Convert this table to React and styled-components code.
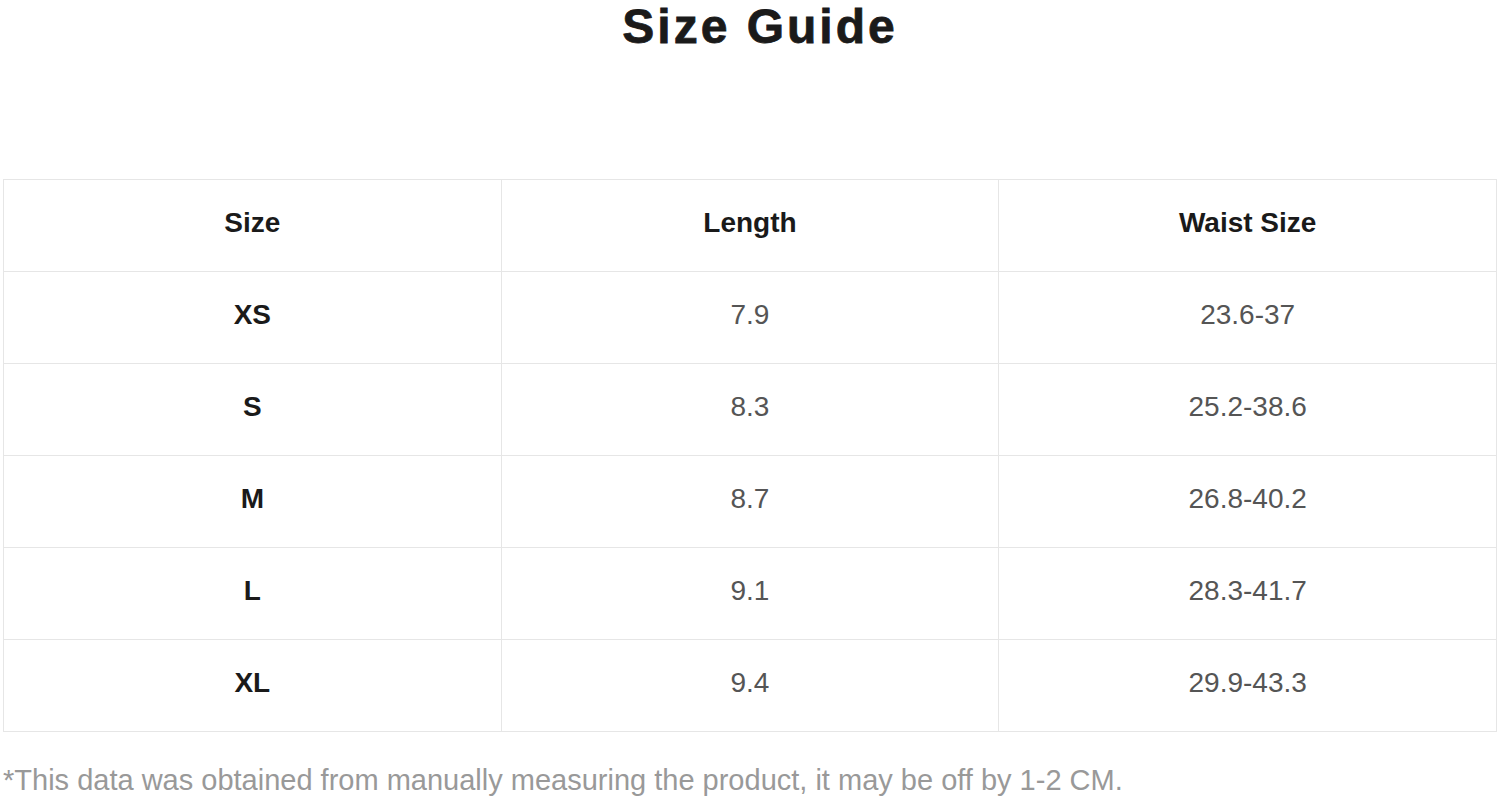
import React from "react";
import styled, { createGlobalStyle } from "styled-components";

const GlobalStyle = createGlobalStyle`
  html, body {
    margin: 0;
    padding: 0;
    background: #ffffff;
    font-family: "Liberation Sans", Arial, sans-serif;
  }
`;

const Page = styled.div`
  width: 1500px;
  height: 798px;
  overflow: hidden;
  background: #ffffff;
  display: flex;
  flex-direction: column;
`;

const Title = styled.h1`
  margin: 0;
  padding-left: 20px;
  text-align: center;
  font-size: 48px;
  line-height: 54px;
  letter-spacing: 3px;
  font-weight: 700;
  color: #1a1a1a;
  -webkit-text-stroke: 0.8px #1a1a1a;
`;

const Table = styled.table`
  margin: 125px 3px 0 3px;
  width: 1494px;
  border-collapse: collapse;
  table-layout: fixed;
`;

const Cell = styled.td`
  height: 92px;
  padding: 0 0 5px 0;
  box-sizing: border-box;
  border: 1px solid #e6e6e6;
  text-align: center;
  vertical-align: middle;
  font-size: 28px;
  font-weight: ${(p) => (p.$strong ? 700 : 400)};
  color: ${(p) => (p.$strong ? "#1a1a1a" : "#555555")};
`;

const Note = styled.p`
  margin: 32px 0 0 0;
  padding-left: 3px;
  font-size: 29px;
  color: #999999;
  white-space: nowrap;
`;

const rows = [
  ["XS", "7.9", "23.6-37"],
  ["S", "8.3", "25.2-38.6"],
  ["M", "8.7", "26.8-40.2"],
  ["L", "9.1", "28.3-41.7"],
  ["XL", "9.4", "29.9-43.3"],
];

export default function App() {
  return (
    <Page>
      <GlobalStyle />
      <Title>Size Guide</Title>
      <Table>
        <tbody>
          <tr>
            <Cell $strong>Size</Cell>
            <Cell $strong>Length</Cell>
            <Cell $strong>Waist Size</Cell>
          </tr>
          {rows.map(([size, len, waist]) => (
            <tr key={size}>
              <Cell $strong>{size}</Cell>
              <Cell>{len}</Cell>
              <Cell>{waist}</Cell>
            </tr>
          ))}
        </tbody>
      </Table>
      <Note>*This data was obtained from manually measuring the product, it may be off by 1-2 CM.</Note>
    </Page>
  );
}
